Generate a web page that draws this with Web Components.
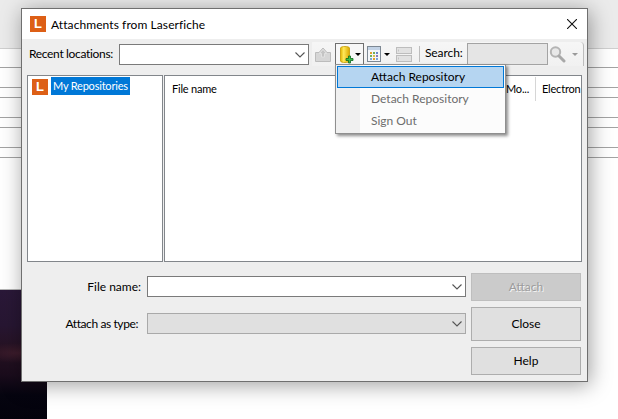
<!doctype html>
<html lang="en">
<head>
<meta charset="utf-8">
<title>Attachments from Laserfiche</title>
<style>
  html,body{margin:0;padding:0;background:#fff}
  body{width:618px;height:419px;overflow:hidden;font-family:Lato,"Noto Sans",sans-serif}
</style>
</head>
<body>
<lf-desktop>
  <lf-dialog heading="Attachments from Laserfiche">
    <lf-toolbar slot="toolbar"></lf-toolbar>
    <lf-panes slot="panes"></lf-panes>
    <lf-form slot="form"></lf-form>
    <lf-menu slot="menu"></lf-menu>
  </lf-dialog>
</lf-desktop>

<script>
const FONT = `font-family:Lato,"Noto Sans",sans-serif;font-size:12px;color:#000`;
const CHEVRON = `<svg width="10" height="6" viewBox="0 0 10 6"><path d="M.5.5 5 5 9.5.5" fill="none" stroke="#555" stroke-width="1.1"/></svg>`;

class LfLogo extends HTMLElement {
  constructor() { super(); this.attachShadow({ mode: "open" }); }
  connectedCallback() {
    this.shadowRoot.innerHTML = `
      <style>
        :host{display:flex;align-items:center;justify-content:center;width:16px;height:16px;flex:none;background:#dd5f16;color:#fff;
          font:700 13px/16px "Liberation Sans",sans-serif}
      </style>L`;
  }
}

class LfDesktop extends HTMLElement {
  constructor() { super(); this.attachShadow({ mode: "open" }); }
  connectedCallback() {
    const rows = [19, 20, 10, 20, 10, 20, 10].map((h) => `<div class="row" style="height:${h - 1}px"></div>`).join("");
    this.shadowRoot.innerHTML = `
      <style>
        :host{display:block;position:relative;width:618px;height:419px;overflow:hidden;background:#fff}
        .band{height:48px;background:#ebebeb;border-bottom:1px solid #cfcfcf}
        .row{border-bottom:1px solid #a3a3a3}
        .gap{height:131px;border-bottom:1px solid #b5b5b5;width:47px}
        .photo{width:47px;height:129px;background:
          radial-gradient(ellipse 40px 10px at 18px 63px,#3d1c2c,transparent),
          linear-gradient(#2a1838 0,#271632 35px,#261222 60px,#1a0c1c 85px,#05040f 105px,#03020c 100%)}
      </style>
      <div class="band"></div>${rows}
      <div class="gap"></div>
      <div class="photo"></div>
      <slot></slot>`;
  }
}

class LfDialog extends HTMLElement {
  constructor() { super(); this.attachShadow({ mode: "open" }); }
  connectedCallback() {
    this.shadowRoot.innerHTML = `
      <style>
        :host{position:absolute;left:21px;top:8px;width:565px;height:372px;display:flex;flex-direction:column;
          background:#eeeeee;border:1px solid #6f6f6f;box-shadow:2px 3px 20px rgba(0,0,0,.38);${FONT}}
        .title{height:30px;flex:none;background:#fff;display:flex;align-items:center;padding:0 10px 0 8px;gap:5px;font-size:12px;letter-spacing:.08px}
        .title span{flex:1;color:#000}
        svg{display:block}
      </style>
      <div class="title">
        <lf-logo></lf-logo>
        <span>${this.getAttribute("heading")}</span>
        <svg width="10" height="10" viewBox="0 0 10 10"><path d="M0 0 10 10M10 0 0 10" stroke="#111" stroke-width="1.1"/></svg>
      </div>
      <slot name="toolbar"></slot>
      <slot name="panes"></slot>
      <slot name="form"></slot>
      <slot name="menu"></slot>`;
  }
}

class LfCombo extends HTMLElement {
  constructor() { super(); this.attachShadow({ mode: "open" }); }
  connectedCallback() {
    const off = this.hasAttribute("disabled");
    this.shadowRoot.innerHTML = `
      <style>
        :host{display:flex;align-items:center;justify-content:flex-end;box-sizing:border-box;height:21px;flex:none;padding-right:3px;
          width:${this.getAttribute("width")}px;background:${off ? "#e0e0e0" : "#fff"};border:1px solid ${off ? "#a9a9a9" : "#7a7a7a"}}
      </style>${CHEVRON}`;
  }
}

class LfToolbar extends HTMLElement {
  constructor() { super(); this.attachShadow({ mode: "open" }); }
  connectedCallback() {
    this.shadowRoot.innerHTML = `
      <style>
        :host{display:flex;height:36px;flex:none;box-sizing:border-box;${FONT}}
        .label{width:90px;margin-left:7px;padding-top:7px;line-height:16px;white-space:nowrap;letter-spacing:-.33px}
        lf-combo{margin-top:5px}
        .strip{display:flex;align-items:flex-start;margin:3px 0 0 3px;width:272px;height:24px;
          background:linear-gradient(#f6f6f6,#f1f1f1);border-radius:0 4px 0 0;border-right:1px solid #bdbdbd;box-sizing:border-box}
        .up{margin:5px 0 0 3px}
        .hot{display:flex;align-items:flex-start;box-sizing:border-box;width:29px;height:24px;margin:1px 0 0 4px;padding:2px 0 0 3px;
          background:#f7f7f7;border:1px solid #6f6f6f;border-bottom:0}
        .drop{margin:11px 0 0 3px}
        .hot .drop{margin:7px 0 0 0}
        .grid{margin:4px 0 0 3px}
        .srv{margin:5px 0 0 6px}
        .sep{width:1px;height:16px;background:#bdbdbd;margin:4px 0 0 7px}
        .search{margin:3px 0 0 5px;width:42px;letter-spacing:-.1px;line-height:16px;white-space:nowrap}
        .input{width:81px;height:22px;box-sizing:border-box;margin:1px 0 0 0;background:#e5e5e5;border:1px solid #a3a3a3}
        .glass{margin:4px 0 0 1px}
        .grey{margin:11px 0 0 5px}
      </style>
      <div class="label">Recent locations:</div>
      <lf-combo width="190"></lf-combo>
      <div class="strip">
        <svg class="up" width="16" height="15" viewBox="0 0 16 15">
          <path d="M.5 5.500H4L8 1l4 4.500h3.500v9H.5z" fill="#d6d6d6" stroke="#bcbcbc"/>
          <path d="M8 2.500 11.500 6.500H9.500V10H6.500V6.500H4.500z" fill="#c4c4c4" stroke="#e6e6e6" stroke-width=".8"/>
        </svg>
        <div class="hot">
          <svg width="16" height="19" viewBox="0 0 16 19">
            <defs><linearGradient id="cyl" x1="0" x2="1" y1="0" y2="0"><stop offset="0" stop-color="#e0b400"/><stop offset=".35" stop-color="#ffe95a"/><stop offset="1" stop-color="#dba800"/></linearGradient></defs>
            <path d="M1.500 2C1.500 1 4 .5 6 .5S10.500 1 10.500 2V15C10.500 16 8 16.500 6 16.500S1.500 16 1.500 15z" fill="url(#cyl)" stroke="#c79a00" stroke-width=".8"/>
            <path d="M9.500 10h2v2.500H14v2h-2.500V17h-2v-2.500H7v-2h2.500z" fill="#3cc04a" stroke="#0d6b1c" stroke-width=".8"/>
          </svg>
          <svg class="drop" width="6" height="3" viewBox="0 0 6 3"><path d="M0 0h6L3 3z" fill="#000"/></svg>
        </div>
        <svg class="grid" width="14" height="16" viewBox="0 0 14 16">
          <rect x=".5" y=".5" width="13" height="15" fill="#f4f6f9" stroke="#7d8893"/>
          <rect x="1" y="1" width="12" height="3" fill="#c3d3e6"/>
          <path d="M3 6h2v2H3z" fill="#e4a02c"/><path d="M6 6h2v2H6z" fill="#6fae5a"/><path d="M9 6h2v2H9z" fill="#6a84c8"/>
          <path d="M3 9h2v2H3z" fill="#6fae5a"/><path d="M6 9h2v2H6z" fill="#d8c04a"/><path d="M9 9h2v2H9z" fill="#8a78b8"/>
          <path d="M3 12h2v2H3z" fill="#7aa5d8"/><path d="M6 12h2v2H6z" fill="#e4a02c"/><path d="M9 12h2v2H9z" fill="#7aa5d8"/>
        </svg>
        <svg class="drop" width="6" height="3" viewBox="0 0 6 3"><path d="M0 0h6L3 3z" fill="#000"/></svg>
        <svg class="srv" width="16" height="15" viewBox="0 0 16 15">
          <rect x=".5" y=".5" width="15" height="6" fill="#e2e2e2" stroke="#bdbdbd"/>
          <rect x=".5" y="8.500" width="15" height="6" fill="#e2e2e2" stroke="#bdbdbd"/>
          <path d="M2.500 2.500v2M2.500 10.500v2" stroke="#c4c4c4"/>
        </svg>
        <div class="sep"></div>
        <div class="search">Search:</div>
        <div class="input"></div>
        <svg class="glass" width="18" height="17" viewBox="0 0 18 17">
          <circle cx="6.500" cy="6" r="4.700" fill="#e8e8e8" stroke="#b4b4b4" stroke-width="2"/>
          <path d="M10 10 15 15" stroke="#a8a8a8" stroke-width="3" stroke-linecap="round"/>
        </svg>
        <svg class="grey" width="6" height="3" viewBox="0 0 6 3"><path d="M0 0h6L3 3z" fill="#9a9a9a"/></svg>
      </div>`;
  }
}

class LfPanes extends HTMLElement {
  constructor() { super(); this.attachShadow({ mode: "open" }); }
  connectedCallback() {
    this.shadowRoot.innerHTML = `
      <style>
        :host{display:flex;gap:1px;height:187px;flex:none;padding:0 5px;${FONT}}
        .pane{box-sizing:border-box;background:#fff;border:1px solid #82868b;overflow:hidden}
        .tree{width:136px;display:flex;align-items:flex-start;padding:1px 0 0 4px;gap:3px}
        lf-logo{margin-top:2px}
        .sel{background:#0078d7;color:#fff;box-sizing:border-box;width:79px;height:18px;line-height:17px;padding:0 0 0 2px;white-space:nowrap;font-size:11px;letter-spacing:-.2px}
        .files{width:418px;display:grid;grid-template-columns:337px 33px 1px 1fr;grid-template-rows:24px;padding-top:1px;align-content:start;white-space:nowrap;font-size:11px;letter-spacing:-.2px}
        .files div{line-height:24px}
        .name{padding-left:7px}
        .bar{background:#d6d6d6}
        .mo{padding-left:4px}
        .el{padding-left:6px}
      </style>
      <div class="pane tree"><lf-logo></lf-logo><div class="sel">My Repositories</div></div>
      <div class="pane files">
        <div class="name">File name</div>
        <div class="mo">Mo...</div>
        <div class="bar"></div>
        <div class="el">Electron</div>
      </div>`;
  }
}

class LfButton extends HTMLElement {
  constructor() { super(); this.attachShadow({ mode: "open" }); }
  connectedCallback() {
    this.shadowRoot.innerHTML = `
      <style>
        :host{display:flex;align-items:center;justify-content:center;box-sizing:border-box;width:110px;padding-bottom:2px;background:#e0e0e0;border:1px solid #adadad;color:#000}
        :host([disabled]){background:#cbcbcb;border-color:#bebebe;color:#9c9c9c;text-shadow:1px 1px 0 #f4f4f4}
      </style><slot></slot>`;
  }
}

class LfForm extends HTMLElement {
  constructor() { super(); this.attachShadow({ mode: "open" }); }
  connectedCallback() {
    this.shadowRoot.innerHTML = `
      <style>
        :host{display:flex;flex:1;box-sizing:border-box;padding:11px 6px 0 0;${FONT}}
        .fields{display:flex;flex-direction:column;gap:16px;margin-top:3px;width:449px}
        .line{display:flex;align-items:center;gap:6px}
        .line label{width:119px;text-align:right;white-space:nowrap}
        .line + .line label{padding-right:3px;width:116px;letter-spacing:-.4px}
        .buttons{display:flex;flex-direction:column;gap:6px}
      </style>
      <div class="fields">
        <div class="line"><label>File name:</label><lf-combo width="319"></lf-combo></div>
        <div class="line"><label>Attach as type:</label><lf-combo width="319" disabled></lf-combo></div>
      </div>
      <div class="buttons">
        <lf-button disabled style="height:28px">Attach</lf-button>
        <lf-button style="height:34px">Close</lf-button>
        <lf-button style="height:28px">Help</lf-button>
      </div>`;
  }
}

class LfMenu extends HTMLElement {
  constructor() { super(); this.attachShadow({ mode: "open" }); }
  connectedCallback() {
    this.shadowRoot.innerHTML = `
      <style>
        :host{position:absolute;left:313px;top:55px;box-sizing:border-box;width:171px;height:70px;padding:1px;
          background:linear-gradient(90deg,#f0f0f0 0,#f0f0f0 24px,#fcfcfc 24px);border:1px solid #8f8f8f;box-shadow:2px 2px 3px rgba(0,0,0,.45);${FONT}}
        div{box-sizing:border-box;height:22px;line-height:20px;padding-left:33px;color:#6d6d6d;border:1px solid transparent;white-space:nowrap}
        .on{background:#b5d5f1;border-color:#0078d7;color:#000}
      </style>
      <div class="on">Attach Repository</div>
      <div>Detach Repository</div>
      <div>Sign Out</div>`;
  }
}

customElements.define("lf-logo", LfLogo);
customElements.define("lf-combo", LfCombo);
customElements.define("lf-button", LfButton);
customElements.define("lf-toolbar", LfToolbar);
customElements.define("lf-panes", LfPanes);
customElements.define("lf-form", LfForm);
customElements.define("lf-menu", LfMenu);
customElements.define("lf-dialog", LfDialog);
customElements.define("lf-desktop", LfDesktop);
</script>
</body>
</html>
